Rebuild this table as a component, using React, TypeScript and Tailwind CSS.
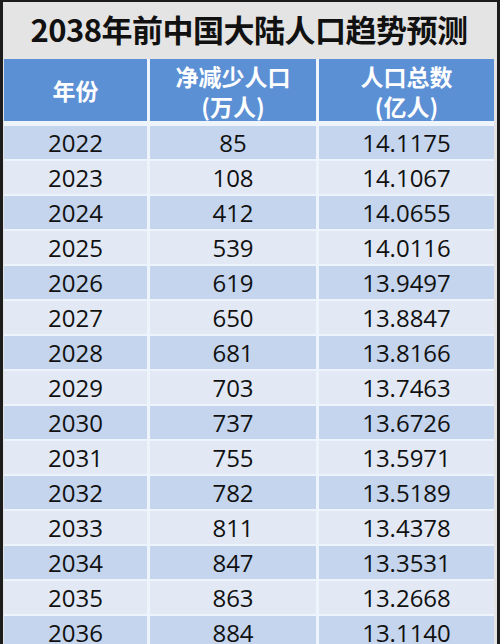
const rows: [string, string, string][] = [
  ['2022', '85', '14.1175'],
  ['2023', '108', '14.1067'],
  ['2024', '412', '14.0655'],
  ['2025', '539', '14.0116'],
  ['2026', '619', '13.9497'],
  ['2027', '650', '13.8847'],
  ['2028', '681', '13.8166'],
  ['2029', '703', '13.7463'],
  ['2030', '737', '13.6726'],
  ['2031', '755', '13.5971'],
  ['2032', '782', '13.5189'],
  ['2033', '811', '13.4378'],
  ['2034', '847', '13.3531'],
  ['2035', '863', '13.2668'],
  ['2036', '884', '13.1140'],
]

const cjk = "font-['Noto_Sans_CJK_SC',sans-serif]"

const App = () => {
  return (
    <div className="w-[500px] h-[644px] overflow-hidden bg-[#e4e4e4] border-x-[3px] border-t-2 border-[#1c1c1c] pl-[1px] pr-[3px]">
      <div className={`h-[57px] pb-[3px] flex items-center justify-center text-[31px] font-bold text-[#111] tracking-[-0.5px] ${cjk}`}>
        2038年前中国大陆人口趋势预测
      </div>
      <div className="grid grid-cols-[143px_166px_175px] gap-x-[3px] bg-[#eef4fb]">
        <div className={`h-[62px] bg-[#5c90d5] flex items-center justify-center text-white font-bold text-[23px] ${cjk}`}>
          年份
        </div>
        <div className={`h-[62px] pt-[2px] bg-[#5c90d5] flex flex-col items-center justify-center text-white font-bold text-[23px] leading-[30px] ${cjk}`}>
          <span>净减少人口</span>
          <span>(万人)</span>
        </div>
        <div className={`h-[62px] pt-[2px] bg-[#5c90d5] flex flex-col items-center justify-center text-white font-bold text-[23px] leading-[30px] ${cjk}`}>
          <span>人口总数</span>
          <span>(亿人)</span>
        </div>
        <div className="col-span-3 h-[5px]" />
        {rows.map((r, i) => (
          <div key={r[0]} className="contents">
            {r.map((cell, j) => (
              <div
                key={j}
                className={`h-[33px] mb-[2px] flex items-center justify-center text-[24px] text-[#111] font-['Open_Sans',sans-serif] ${
                  i % 2 === 0 ? 'bg-[#c4d5ed]' : 'bg-[#e2e9f5]'
                }`}
              >
                {cell}
              </div>
            ))}
          </div>
        ))}
      </div>
    </div>
  )
}

export default App
